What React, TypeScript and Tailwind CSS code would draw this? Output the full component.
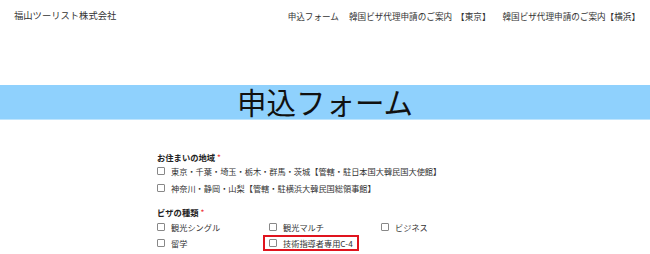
import React from "react";

const font = { fontFamily: '"Noto Sans CJK JP", "Noto Sans", sans-serif' };

function Box() {
  return <span className="inline-block w-[8px] h-[8px] border border-[#888] rounded-[1px] bg-white mr-[6px] shrink-0" />;
}

function Item({ label, boxed }: { label: string; boxed?: boolean }) {
  return (
    <div className="flex items-center h-[16px]">
      <div className={boxed ? "flex items-center border-2 border-[#e0141e] px-[4px] h-[16px] -ml-[6px]" : "flex items-center"}>
        <Box />
        <span className="text-[8.2px] text-[#333] leading-none whitespace-nowrap">{label}</span>
      </div>
    </div>
  );
}

export default function App() {
  return (
    <div className="w-[650px] h-[254px] bg-white overflow-hidden" style={font}>
      <header className="flex items-center justify-between h-[32px] pl-[14px] pr-[10px]">
        <div className="text-[9.3px] text-[#333] whitespace-nowrap">福山ツーリスト株式会社</div>
        <nav className="flex items-center text-[8.6px] text-[#333] whitespace-nowrap">
          <span className="mr-[10px]">申込フォーム</span>
          <span>韓国ビザ代理申請のご案内</span>
          <span className="ml-[4px] mr-[12px]">【東京】</span>
          <span>韓国ビザ代理申請のご案内【横浜】</span>
        </nav>
      </header>
      <div className="h-[53px]" />
      <div className="h-[35px] bg-[#8fd1fd] border-b border-[#bfe5fd] flex items-center justify-center">
        <h1 className="text-[29.5px] leading-none text-[#111]">申込フォーム</h1>
      </div>
      <div className="w-[336px] mx-auto pt-[31px]">
        <div className="h-[12px] flex items-center text-[8.3px] font-bold text-[#222] leading-none">
          お住まいの地域<span className="text-[#e33] ml-[2px] font-normal">*</span>
        </div>
        <Item label="東京・千葉・埼玉・栃木・群馬・茨城【管轄・駐日本国大韓民国大使館】" />
        <div className="mt-[1px]">
          <Item label="神奈川・静岡・山梨【管轄・駐横浜大韓民国総領事館】" />
        </div>
        <div className="h-[12px] mt-[10px] flex items-center text-[8.3px] font-bold text-[#222] leading-none">
          ビザの種類<span className="text-[#e33] ml-[2px] font-normal">*</span>
        </div>
        <div className="grid grid-cols-3 mt-[1px]">
          <Item label="観光シングル" />
          <Item label="観光マルチ" />
          <Item label="ビジネス" />
          <Item label="留学" />
          <Item label="技術指導者専用C-4" boxed />
        </div>
      </div>
    </div>
  );
}
